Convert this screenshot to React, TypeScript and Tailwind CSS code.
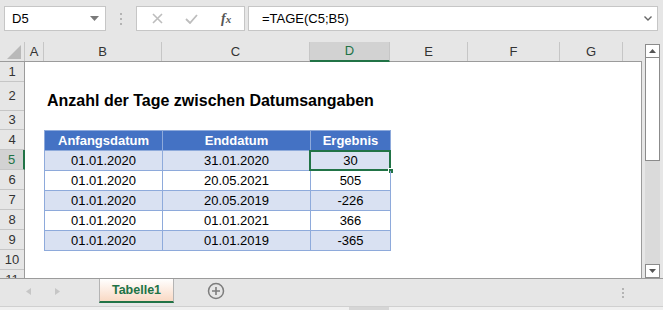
import React from "react";

type Row = { start: string; end: string; result: string };

const rows: Row[] = [
  { start: "01.01.2020", end: "31.01.2020", result: "30" },
  { start: "01.01.2020", end: "20.05.2021", result: "505" },
  { start: "01.01.2020", end: "20.05.2019", result: "-226" },
  { start: "01.01.2020", end: "01.01.2021", result: "366" },
  { start: "01.01.2020", end: "01.01.2019", result: "-365" },
];

const columns = [
  { name: "A", w: "w-[19px]" },
  { name: "B", w: "w-[118px]" },
  { name: "C", w: "w-[148px]" },
  { name: "D", w: "w-[80px]" },
  { name: "E", w: "w-[78px]" },
  { name: "F", w: "w-[92px]" },
  { name: "G", w: "w-[63px]" },
];

const rowHeaders = [
  { n: "1", h: "h-[20px]" },
  { n: "2", h: "h-[29px]" },
  { n: "3", h: "h-[19px]" },
  { n: "4", h: "h-[20px]" },
  { n: "5", h: "h-[20px]" },
  { n: "6", h: "h-[20px]" },
  { n: "7", h: "h-[20px]" },
  { n: "8", h: "h-[20px]" },
  { n: "9", h: "h-[20px]" },
  { n: "10", h: "h-[20px]" },
  { n: "11", h: "h-[20px]" },
];

const FormulaBar = () => (
  <div className="h-[42px] flex items-start pt-[6px] pl-[4px]">
    {/* Namenfeld */}
    <div className="w-[102px] h-[25px] bg-white border border-[#c6c6c6] flex items-center justify-between pl-[7px] pr-[6px]">
      <span className="text-[13px] text-black">D5</span>
      <svg width="9" height="5" viewBox="0 0 9 5">
        <polygon points="0,0 9,0 4.5,5" fill="#7a7a7a" />
      </svg>
    </div>
    <div className="w-[30px] h-[25px] flex flex-col items-center justify-center gap-[3px]">
      <span className="w-[2px] h-[2px] bg-[#b4b4b4]" />
      <span className="w-[2px] h-[2px] bg-[#b4b4b4]" />
      <span className="w-[2px] h-[2px] bg-[#b4b4b4]" />
    </div>
    {/* Abbrechen / Eingeben / Funktion */}
    <div className="w-[109px] h-[25px] bg-white border border-[#c6c6c6] flex items-center">
      <div className="w-[38px] flex justify-center pl-[3px]">
        <svg width="11" height="11" viewBox="0 0 11 11">
          <path d="M1 1 L10 10 M10 1 L1 10" stroke="#bdbdbd" strokeWidth="1.6" />
        </svg>
      </div>
      <div className="w-[34px] flex justify-center">
        <svg width="13" height="10" viewBox="0 0 13 10">
          <path d="M1 5 L5 9 L12 1" stroke="#bdbdbd" strokeWidth="1.8" fill="none" />
        </svg>
      </div>
      <div className="w-[36px] flex justify-center">
        <span className="font-['Liberation_Serif',serif] italic font-bold text-[14px] text-[#555]">
          f<span className="text-[11px]">x</span>
        </span>
      </div>
    </div>
    <div className="w-[3px]" />
    <div className="w-[410px] h-[25px] bg-white border border-[#c6c6c6] flex items-center justify-between pl-[13px] pr-[5px]">
      <span className="text-[13px] text-black">=TAGE(C5;B5)</span>
      <svg width="8" height="5" viewBox="0 0 8 5">
        <path d="M0.5 0.5 L4 4 L7.5 0.5" stroke="#666" strokeWidth="1.4" fill="none" />
      </svg>
    </div>
  </div>
);

const ColumnHeaders = () => (
  <div className="h-[20px] flex border-b border-[#9b9b9b]">
    <div className="w-[25px] border-r border-[#c6c6c6] flex items-end justify-end pr-[3px] pb-[2px]">
      <svg width="14" height="14" viewBox="0 0 14 14">
        <polygon points="14,0 14,14 0,14" fill="#b9b9b9" />
      </svg>
    </div>
    {columns.map((c) =>
      c.name === "D" ? (
        <div
          key={c.name}
          className={`${c.w} bg-[#d2d2d2] border-b-2 border-[#217346] -mb-px flex items-center justify-center text-[13px] text-[#217346] border-r border-r-[#c6c6c6]`}
        >
          {c.name}
        </div>
      ) : (
        <div
          key={c.name}
          className={`${c.w} border-r border-[#c6c6c6] flex items-center justify-center text-[13px] text-[#333]`}
        >
          {c.name}
        </div>
      )
    )}
    <div className="flex-1" />
  </div>
);

const RowHeaderColumn = () => (
  <div className="w-[25px] shrink-0 flex flex-col border-r border-[#9b9b9b]">
    {rowHeaders.map((r) =>
      r.n === "5" ? (
        <div
          key={r.n}
          className={`${r.h} shrink-0 bg-[#d2d2d2] border-b border-[#c6c6c6] border-r-2 border-r-[#217346] -mr-px flex items-center justify-center text-[13px] text-[#217346]`}
        >
          {r.n}
        </div>
      ) : (
        <div
          key={r.n}
          className={`${r.h} shrink-0 border-b border-[#c6c6c6] flex items-center justify-center text-[13px] text-[#333]`}
        >
          {r.n}
        </div>
      )
    )}
  </div>
);

const DataTable = () => (
  <div className="ml-[19px] w-[347px] border-l border-t border-[#8eaadb]">
    <div className="h-[20px] flex bg-[#4472c4] text-white font-bold text-[13px]">
      <div className="w-[118px] border-r border-b border-[#8eaadb] flex items-center justify-center">Anfangsdatum</div>
      <div className="w-[148px] border-r border-b border-[#8eaadb] flex items-center justify-center">Enddatum</div>
      <div className="w-[80px] border-r border-b border-[#8eaadb] flex items-center justify-center">Ergebnis</div>
    </div>
    {rows.map((r, i) => (
      <div
        key={i}
        className={`h-[20px] flex text-[13px] text-black ${i % 2 === 0 ? "bg-[#d9e1f2]" : "bg-white"}`}
      >
        <div className="w-[118px] border-r border-b border-[#8eaadb] flex items-center justify-center">{r.start}</div>
        <div className="w-[148px] border-r border-b border-[#8eaadb] flex items-center justify-center">{r.end}</div>
        <div className="relative w-[80px] border-r border-b border-[#8eaadb] flex items-center justify-center">
          {r.result}
          {i === 0 && (
            <>
              <div className="absolute -left-[2px] -top-[1px] -right-[1px] -bottom-[1px] border-2 border-[#217346]" />
              <div className="absolute -right-[4px] -bottom-[4px] w-[6px] h-[6px] bg-[#217346] border border-white" />
            </>
          )}
        </div>
      </div>
    ))}
  </div>
);

const Sheet = () => (
  <div className="w-[642px] flex flex-col">
    <ColumnHeaders />
    <div className="flex-1 flex overflow-hidden">
      <RowHeaderColumn />
      <div className="flex-1 bg-white border-r border-[#9b9b9b] flex flex-col">
        <div className="h-[20px] shrink-0" />
        <div className="h-[29px] shrink-0 flex items-end pl-[22px] pb-[2px]">
          <span className="font-bold text-[16px] text-black leading-none">
            Anzahl der Tage zwischen Datumsangaben
          </span>
        </div>
        <div className="h-[19px] shrink-0" />
        <DataTable />
      </div>
    </div>
  </div>
);

const VerticalScrollbar = () => (
  <div className="w-[21px] flex flex-col pl-[3px] pr-[3px] pt-[2px]">
    <div className="h-[14px] border border-[#8b8b8b] bg-white flex items-center justify-center">
      <svg width="7" height="4" viewBox="0 0 7 4">
        <polygon points="0,4 7,4 3.5,0" fill="#555" />
      </svg>
    </div>
    <div className="h-[103px] border border-t-0 border-[#8b8b8b] bg-white" />
    <div className="flex-1 bg-[#dadada]" />
    <div className="h-[14px] border border-[#8b8b8b] bg-white flex items-center justify-center">
      <svg width="7" height="4" viewBox="0 0 7 4">
        <polygon points="0,0 7,0 3.5,4" fill="#555" />
      </svg>
    </div>
  </div>
);

const TabBar = () => (
  <div className="h-[31px] flex flex-col">
    <div className="h-[27px] flex items-start">
      <div className="w-[99px] h-[24px] flex items-center pl-[26px] gap-[24px]">
        <svg width="5" height="7" viewBox="0 0 5 7">
          <polygon points="5,0 5,7 0,3.5" fill="#c6c6c6" />
        </svg>
        <svg width="5" height="7" viewBox="0 0 5 7">
          <polygon points="0,0 0,7 5,3.5" fill="#c6c6c6" />
        </svg>
      </div>
      <div className="w-[75px] h-[24px] border-x border-[#b4b4b4] border-b-2 border-b-[#217346] bg-linear-to-b from-white to-[#f9d9c4] flex items-center justify-center">
        <span className="font-bold text-[12.5px] text-[#217346]">Tabelle1</span>
      </div>
      <div className="w-[84px] h-[24px] flex items-center justify-center">
        <svg width="18" height="18" viewBox="0 0 18 18">
          <circle cx="9" cy="9" r="7.5" stroke="#7d7d7d" strokeWidth="1.5" fill="none" />
          <path d="M9 5 V13 M5 9 H13" stroke="#7d7d7d" strokeWidth="1.6" />
        </svg>
      </div>
      <div className="w-[364px]" />
      <div className="w-[2px] h-[24px] flex flex-col items-center justify-center gap-[2px] pt-[3px]">
        <span className="w-[2px] h-[2px] bg-[#b4b4b4]" />
        <span className="w-[2px] h-[2px] bg-[#b4b4b4]" />
        <span className="w-[2px] h-[2px] bg-[#b4b4b4]" />
      </div>
    </div>
    <div className="flex-1 flex border-t border-[#d0d0d0] bg-[#f0f0f0]">
      <div className="w-[349px]" />
      <div className="w-[40px] bg-[#d6d6d6]" />
    </div>
  </div>
);

export default function App() {
  return (
    <div className="w-[663px] h-[310px] overflow-hidden bg-[#e6e6e6] flex flex-col font-['Liberation_Sans',Arial,sans-serif]">
      <FormulaBar />
      <div className="h-[237px] flex border-b border-[#9b9b9b]">
        <Sheet />
        <VerticalScrollbar />
      </div>
      <TabBar />
    </div>
  );
}
